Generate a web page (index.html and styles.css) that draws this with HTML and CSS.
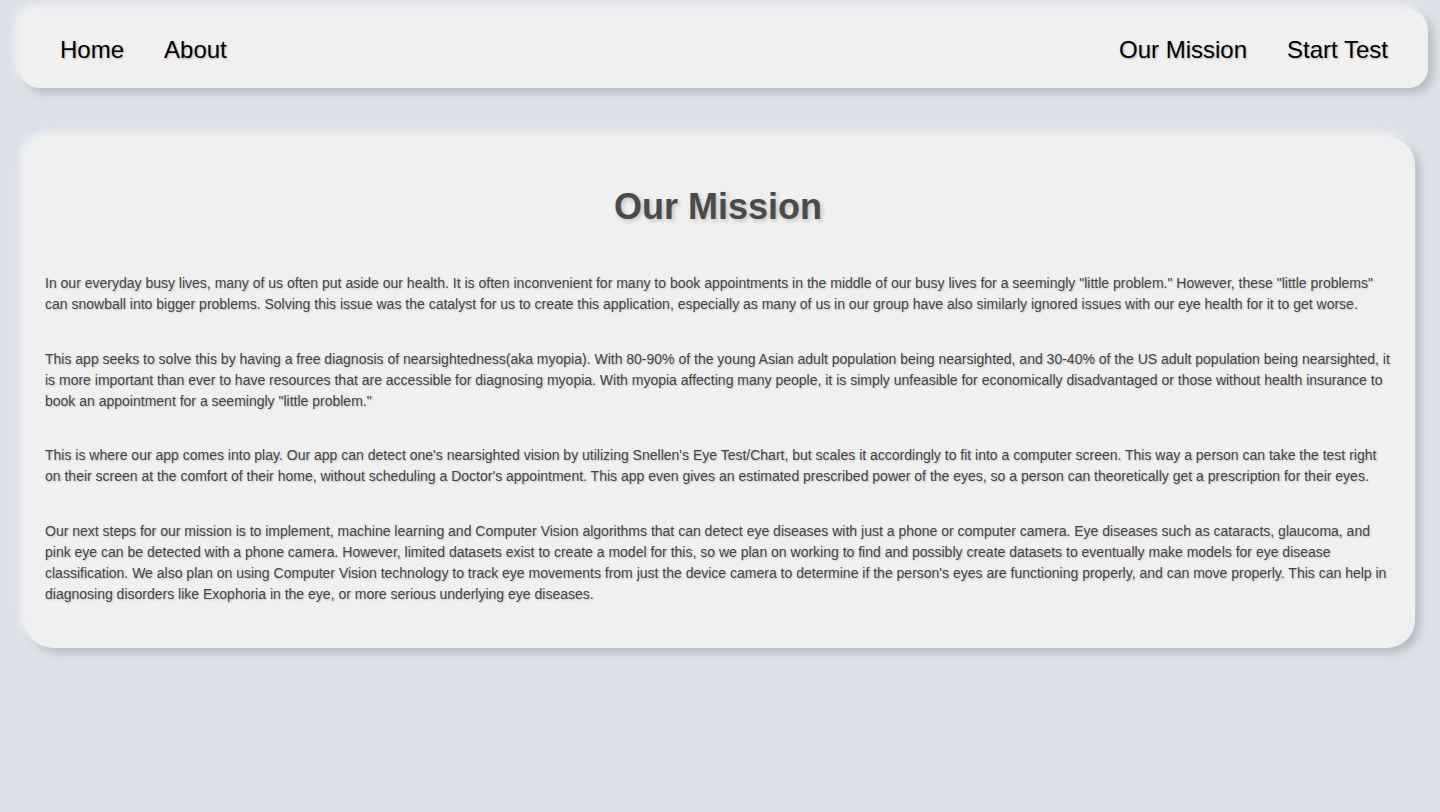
FILE: index.html
```html
<!DOCTYPE html>
<html lang="en">
<head>
<meta charset="utf-8">
<title>Our Mission</title>
<link rel="stylesheet" href="styles.css">
</head>
<body>
<nav class="navbar">
  <div class="nav-group">
    <a class="nav-link" href="#">Home</a>
    <a class="nav-link" href="#">About</a>
  </div>
  <div class="nav-group">
    <a class="nav-link" href="#">Our Mission</a>
    <a class="nav-link" href="#">Start Test</a>
  </div>
</nav>
<main class="card">
  <h1 class="title">Our Mission</h1>
  <p class="text">In our everyday busy lives, many of us often put aside our health. It is often inconvenient for many to book appointments in the middle of our busy lives for a seemingly "little problem." However, these "little problems" can snowball into bigger problems. Solving this issue was the catalyst for us to create this application, especially as many of us in our group have also similarly ignored issues with our eye health for it to get worse.</p>
  <p class="text">This app seeks to solve this by having a free diagnosis of nearsightedness(aka myopia). With 80-90% of the young Asian adult population being nearsighted, and 30-40% of the US adult population being nearsighted, it is more important than ever to have resources that are accessible for diagnosing myopia. With myopia affecting many people, it is simply unfeasible for economically disadvantaged or those without health insurance to book an appointment for a seemingly "little problem."</p>
  <p class="text">This is where our app comes into play. Our app can detect one's nearsighted vision by utilizing Snellen's Eye Test/Chart, but scales it accordingly to fit into a computer screen. This way a person can take the test right on their screen at the comfort of their home, without scheduling a Doctor's appointment. This app even gives an estimated prescribed power of the eyes, so a person can theoretically get a prescription for their eyes.</p>
  <p class="text">Our next steps for our mission is to implement, machine learning and Computer Vision algorithms that can detect eye diseases with just a phone or computer camera. Eye diseases such as cataracts, glaucoma, and pink eye can be detected with a phone camera. However, limited datasets exist to create a model for this, so we plan on working to find and possibly create datasets to eventually make models for eye disease classification. We also plan on using Computer Vision technology to track eye movements from just the device camera to determine if the person's eyes are functioning properly, and can move properly. This can help in diagnosing disorders like Exophoria in the eye, or more serious underlying eye diseases.</p>
</main>
</body>
</html>
```

FILE: styles.css
```css
html, body {
  margin: 0;
  padding: 0;
}

body {
  background: #dde1e7;
  font-family: "Liberation Sans", Arial, sans-serif;
  min-height: 812px;
  padding-top: 10px;
  box-sizing: border-box;
}

.navbar {
  display: flex;
  justify-content: space-between;
  align-items: center;
  height: 78px;
  margin: 0 12px 0 20px;
  padding: 2px 40px 0;
  box-sizing: border-box;
  background: #f0f0f0;
  border-radius: 20px;
  box-shadow: -5px -5px 9px rgba(255, 255, 255, 0.6), 5px 5px 9px rgba(94, 104, 121, 0.3);
}

.nav-group {
  display: flex;
  gap: 40px;
}

.nav-link {
  font-size: 24px;
  color: #000;
  text-decoration: none;
  text-shadow: 1px 1px 2px rgba(0, 0, 0, 0.25);
}

.card {
  margin: 49px 25px 0 25px;
  padding: 49px 24px 43px 20px;
  background: #f0f0f0;
  border-radius: 28px;
  box-shadow: -5px -5px 9px rgba(255, 255, 255, 0.6), 5px 5px 9px rgba(94, 104, 121, 0.3);
}

.title {
  margin: 0 0 45px;
  text-align: center;
  font-size: 36px;
  line-height: 42px;
  font-weight: bold;
  color: #4a4a4a;
  text-shadow: 2px 2px 4px rgba(0, 0, 0, 0.2);
}

.text {
  margin: 0 0 33.7px;
  font-size: 14px;
  line-height: 21px;
  color: #444;
  text-shadow: 1px 1px 2px rgba(0, 0, 0, 0.2);
}

.text:last-child {
  margin-bottom: 0;
}
```
